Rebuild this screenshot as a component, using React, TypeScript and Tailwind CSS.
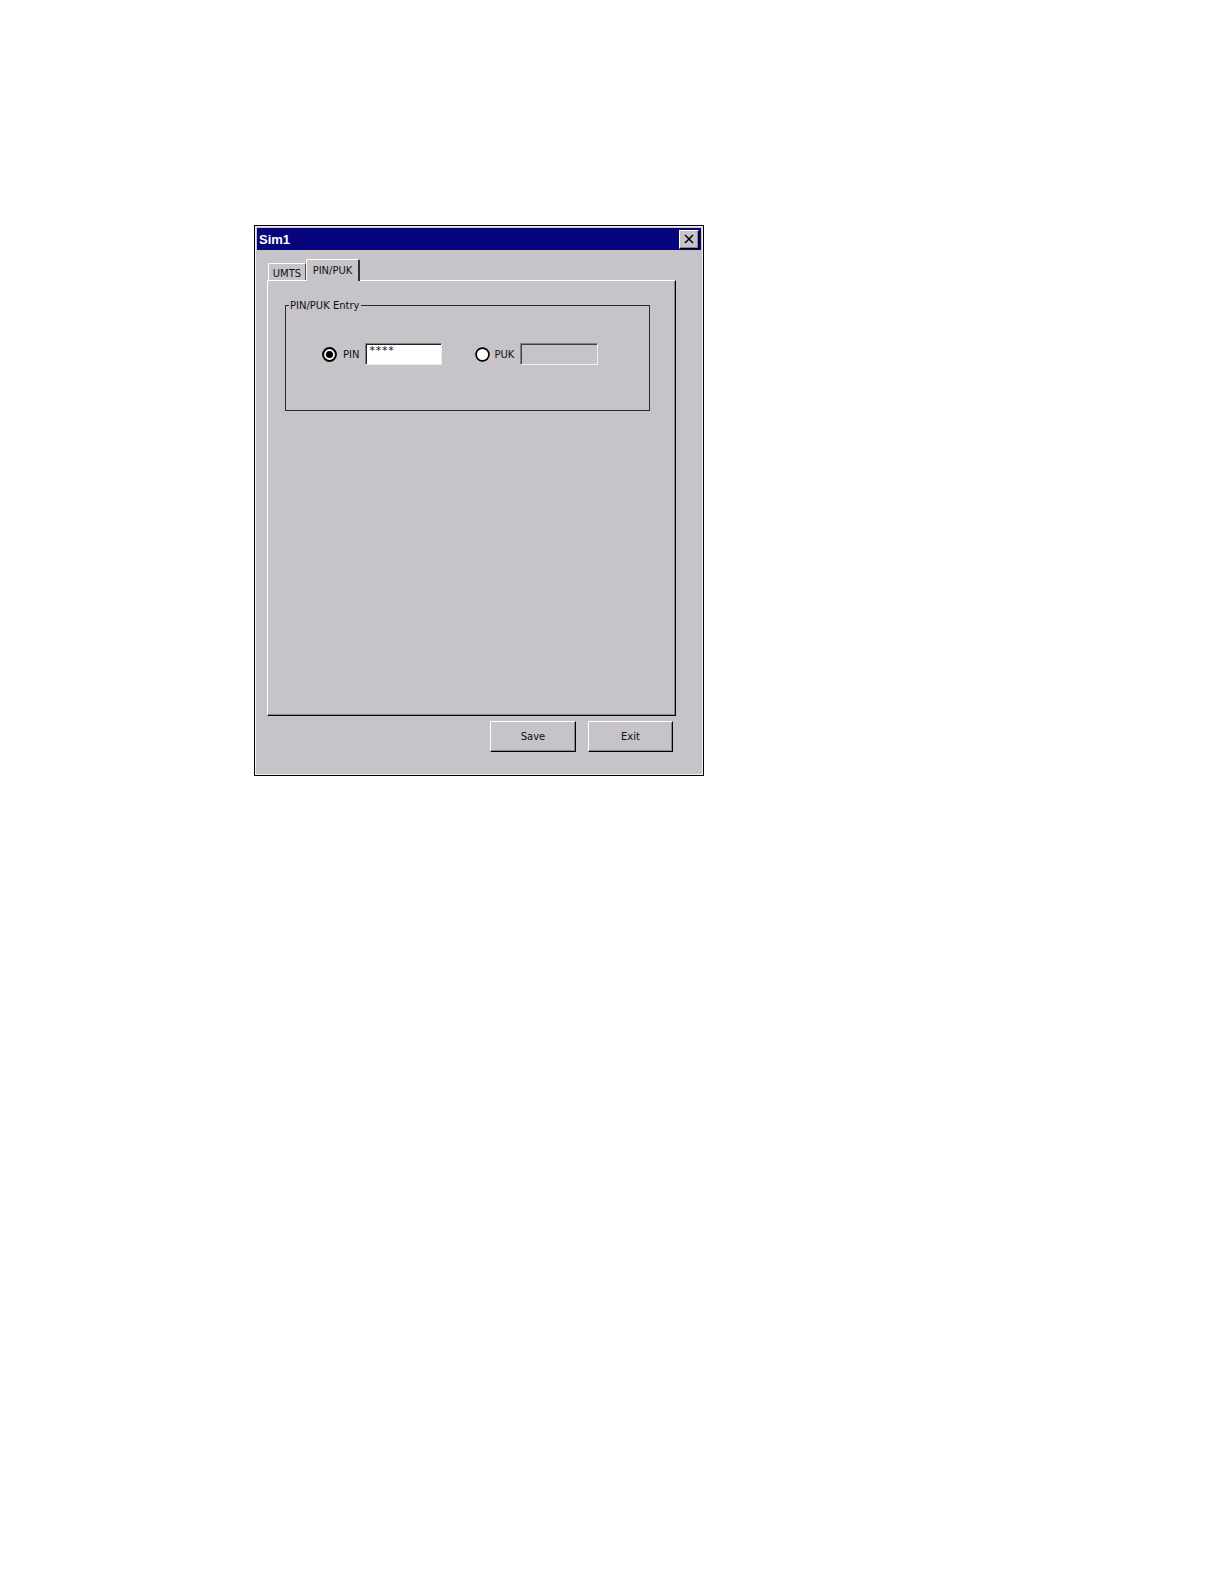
import React from "react";

const GRAY = "bg-[#c6c4c8]";

function Radio({ checked }: { checked: boolean }) {
  return (
    <svg width="15" height="15" viewBox="0 0 15 15" className="shrink-0">
      <circle cx="7.5" cy="7.5" r="6.4" fill="#ffffff" stroke="#000000" strokeWidth={checked ? 2 : 1.7} />
      {checked && <circle cx="7.5" cy="7.5" r="3.6" fill="#000000" />}
    </svg>
  );
}

function Button({ label, w }: { label: string; w: string }) {
  return (
    <div
      className={`${w} h-[31px] ${GRAY} border border-t-white border-l-white border-r-black border-b-black shadow-[inset_-1px_-1px_0_#8a888c] flex items-center justify-center text-[10px] text-[#111]`}
    >
      {label}
    </div>
  );
}

export default function App() {
  return (
    <div
      className="w-[1224px] h-[1584px] bg-white pt-[225px] pl-[254px]"
      style={{ fontFamily: '"DejaVu Sans", Verdana, sans-serif' }}
    >
      <div className={`w-[450px] h-[551px] border border-black ${GRAY}`}>
        <div className="w-full h-full border border-[#f0f0f0] px-[1px] pt-[1px] flex flex-col">
          {/* Title bar */}
          <div className="h-[22px] shrink-0 bg-[#08047c] flex items-center justify-between pl-[2px] pr-[2px]">
            <span
              className="text-white font-bold text-[13px] leading-none"
              style={{ fontFamily: '"Liberation Sans", Arial, sans-serif' }}
            >
              Sim1
            </span>
            <div
              className={`w-[20px] h-[19px] ${GRAY} border border-t-white border-l-white border-r-black border-b-black shadow-[inset_-1px_-1px_0_#8a888c] flex items-center justify-center`}
            >
              <svg width="10" height="10" viewBox="0 0 10 10">
                <path d="M1 1 L9 9 M9 1 L1 9" stroke="#000" strokeWidth="1.5" />
              </svg>
            </div>
          </div>

          {/* Body */}
          <div className="pl-[10px] pt-[9px] flex flex-col">
            {/* Tabs */}
            <div className="flex items-end h-[21px] pl-[1px]">
              <div className={`w-[38px] h-[17px] ${GRAY} border-t border-l border-white border-r border-r-[#404040] rounded-tl-[2px] flex items-center justify-center text-[10px] text-[#111] pt-[2px]`}>
                UMTS
              </div>
              <div className={`relative z-10 w-[54px] h-[22px] -mb-[1px] ${GRAY} border-t border-l border-white border-r-2 border-r-[#303030] rounded-tl-[2px] rounded-tr-[2px] flex justify-center items-start pt-[3px] text-[10px] text-[#111]`}>
                PIN/PUK
              </div>
            </div>

            {/* Tab panel */}
            <div className={`w-[409px] h-[436px] ${GRAY} border border-t-white border-l-white border-r-black border-b-black shadow-[inset_-1px_-1px_0_#8a888c] pt-[24px] pl-[17px]`}>
              {/* Group box */}
              <div className="relative w-[365px] h-[106px] border border-[#2c2c2c]">
                <span className={`absolute -top-[7px] left-[3px] ${GRAY} px-[1px] text-[10px] leading-[13px] text-[#111]`}>
                  PIN/PUK Entry
                </span>
                <div className="flex items-center pt-[37px] pl-[36px]">
                  <Radio checked />
                  <span className="ml-[6px] text-[10px] text-[#111]">PIN</span>
                  <div className="ml-[6px] w-[77px] h-[22px] bg-white border border-t-[#808080] border-l-[#808080] border-r-[#e8e8e8] border-b-[#e8e8e8] shadow-[inset_1px_1px_0_#202020] pl-[3px] pt-[1px] text-[11px] leading-[12px] tracking-[0.8px] text-[#111]">
                    ****
                  </div>
                  <div className="ml-[33px]">
                    <Radio checked={false} />
                  </div>
                  <span className="ml-[4px] text-[10px] text-[#111]">PUK</span>
                  <div className={`ml-[6px] w-[78px] h-[22px] ${GRAY} border border-t-[#808080] border-l-[#808080] border-r-[#f0f0f0] border-b-[#f0f0f0] shadow-[inset_1px_1px_0_#404040]`} />
                </div>
              </div>
            </div>

            {/* Buttons */}
            <div className="flex w-[406px] justify-end gap-[12px] mt-[5px]">
              <Button label="Save" w="w-[86px]" />
              <Button label="Exit" w="w-[85px]" />
            </div>
          </div>
        </div>
      </div>
    </div>
  );
}
